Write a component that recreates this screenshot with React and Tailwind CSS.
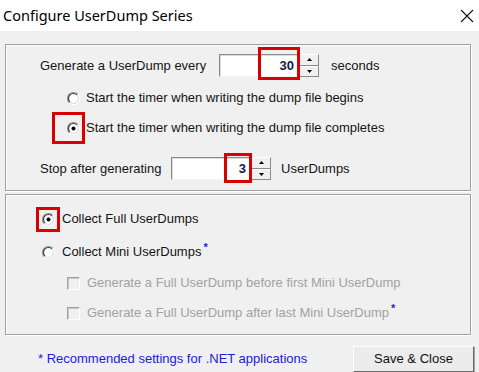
import React from 'react';

function Radio({ checked }) {
    return (
        <svg width="13" height="13" viewBox="0 0 13 13" className="shrink-0">
            <circle cx="6.5" cy="6.5" r="5.5" fill="#fff" />
            <path d="M2.25 10.75 A6 6 0 0 1 10.75 2.25" fill="none" stroke="#9a9a9a" strokeWidth="1.2" />
            <path d="M2.95 10.05 A5 5 0 0 1 10.05 2.95" fill="none" stroke="#404040" strokeWidth="1.2" />
            <path d="M10.75 2.25 A6 6 0 0 1 2.25 10.75" fill="none" stroke="#ffffff" strokeWidth="1.2" />
            <path d="M10.05 2.95 A5 5 0 0 1 2.95 10.05" fill="none" stroke="#dcdcdc" strokeWidth="1.2" />
            {checked && <circle cx="6.5" cy="6.5" r="2" fill="#000" />}
        </svg>
    );
}

function Checkbox() {
    return (
        <div className="w-[13px] h-[13px] shrink-0 border border-t-[#a0a0a0] border-l-[#a0a0a0] border-b-white border-r-white bg-[#f0f0f0] shadow-[inset_1px_1px_0_#c8c8c8]" />
    );
}

function Spinner() {
    return (
        <div className="flex flex-col w-[20px] h-[23px]">
            {['up', 'down'].map((d) => (
                <div
                    key={d}
                    className="flex-1 flex items-center justify-center bg-[#f0f0f0] border border-t-white border-l-white border-b-[#8a8a8a] border-r-[#8a8a8a]"
                >
                    <svg width="5" height="3" viewBox="0 0 5 3">
                        <path d={d === 'up' ? 'M0 3 L2.5 0 L5 3 Z' : 'M0 0 L2.5 3 L5 0 Z'} fill="#000" />
                    </svg>
                </div>
            ))}
        </div>
    );
}

function NumberBox({ value, redClass }) {
    return (
        <div className="relative flex items-center">
            <div className="w-[80px] h-[23px] bg-white border border-t-[#8a8a8a] border-l-[#8a8a8a] border-b-[#f4f4f4] border-r-[#f4f4f4] shadow-[inset_1px_1px_0_#dcdcdc] flex items-center justify-end pr-[4px]">
                <span className="font-bold text-[13px] text-[#10204a]">{value}</span>
            </div>
            <Spinner />
            <div className={`absolute border-[3px] border-[#d80000] ${redClass}`} />
        </div>
    );
}

export default function App() {
    return (
        <div
            className="w-[479px] h-[372px] bg-[#f0f0f0] flex flex-col text-[13px] text-[#151515] overflow-hidden"
            style={{ fontFamily: '"Liberation Sans", Arial, sans-serif' }}
        >
            {/* title bar */}
            <div className="h-[31px] bg-white flex items-center justify-between pl-[3px] pr-[3px] shrink-0">
                <span className="text-[14.5px] text-black" style={{ fontFamily: '"Noto Sans", sans-serif' }}>
                    Configure UserDump Series
                </span>
                <svg width="14" height="14" viewBox="0 0 14 14" className="mr-[2px]">
                    <path d="M1 1 L13 13 M13 1 L1 13" stroke="#111" strokeWidth="1.1" />
                </svg>
            </div>

            <div className="flex flex-col px-[5px] pr-[8px]">
                {/* group 1 */}
                <div className="mt-[13px] h-[147px] border border-[#a0a0a0] shadow-[inset_1px_1px_0_#fff,1px_1px_0_#fff] flex flex-col pl-[34px] pt-[9px]">
                    <div className="flex items-center h-[23px]">
                        <span className="w-[179px]">Generate a UserDump every</span>
                        <NumberBox value="30" redClass="left-[39px] top-[-7px] w-[42px] h-[33px]" />
                        <span className="ml-[12px]">seconds</span>
                    </div>
                    <div className="flex items-center h-[20px] mt-[11px] pl-[27px] gap-[6px]">
                        <Radio />
                        <span>Start the timer when writing the dump file begins</span>
                    </div>
                    <div className="flex items-center h-[20px] mt-[10px] pl-[27px] gap-[6px]">
                        <div className="relative flex">
                            <Radio checked />
                            <div className="absolute border-[3px] border-[#d80000] left-[-15px] top-[-10px] w-[33px] h-[32px]" />
                        </div>
                        <span>Start the timer when writing the dump file completes</span>
                    </div>
                    <div className="flex items-center h-[23px] mt-[19px]">
                        <span className="w-[131px]">Stop after generating</span>
                        <NumberBox value="3" redClass="left-[53px] top-[-4px] w-[28px] h-[30px]" />
                        <span className="ml-[10px]">UserDumps</span>
                    </div>
                </div>

                {/* group 2 */}
                <div className="mt-[3px] h-[141px] border border-[#a0a0a0] shadow-[inset_1px_1px_0_#fff,1px_1px_0_#fff] flex flex-col pl-[36px]">
                    <div className="flex items-center h-[20px] mt-[14px] gap-[7px]">
                        <div className="relative flex">
                            <Radio checked />
                            <div className="absolute border-[3px] border-[#d80000] left-[-6px] top-[-6px] w-[24px] h-[25px]" />
                        </div>
                        <span>Collect Full UserDumps</span>
                    </div>
                    <div className="flex items-center h-[20px] mt-[13px] gap-[7px]">
                        <Radio />
                        <span>
                            Collect Mini UserDumps
                            <sup className="text-[#1c1ce0] font-bold text-[11px] ml-[2px]">*</sup>
                        </span>
                    </div>
                    <div className="flex items-center h-[20px] mt-[11px] pl-[25px] gap-[7px] text-[#a2a2a2]">
                        <Checkbox />
                        <span>Generate a Full UserDump before first Mini UserDump</span>
                    </div>
                    <div className="flex items-center h-[20px] mt-[10px] pl-[25px] gap-[7px] text-[#a2a2a2]">
                        <Checkbox />
                        <span>
                            Generate a Full UserDump after last Mini UserDump
                            <sup className="text-[#1c1ce0] font-bold text-[11px] ml-[2px]">*</sup>
                        </span>
                    </div>
                </div>

                {/* footer */}
                <div className="flex items-center justify-between mt-[11px] pl-[33px]">
                    <span className="text-[#2020d8]">* Recommended settings for .NET applications</span>
                    <button className="w-[121px] h-[26px] bg-[#ececec] border border-t-white border-l-white border-b-[#6a6a6a] border-r-[#6a6a6a] shadow-[1px_1px_0_#a0a0a0] text-[#111] text-[13px] -mr-[3px]">
                        Save &amp; Close
                    </button>
                </div>
            </div>
        </div>
    );
}
